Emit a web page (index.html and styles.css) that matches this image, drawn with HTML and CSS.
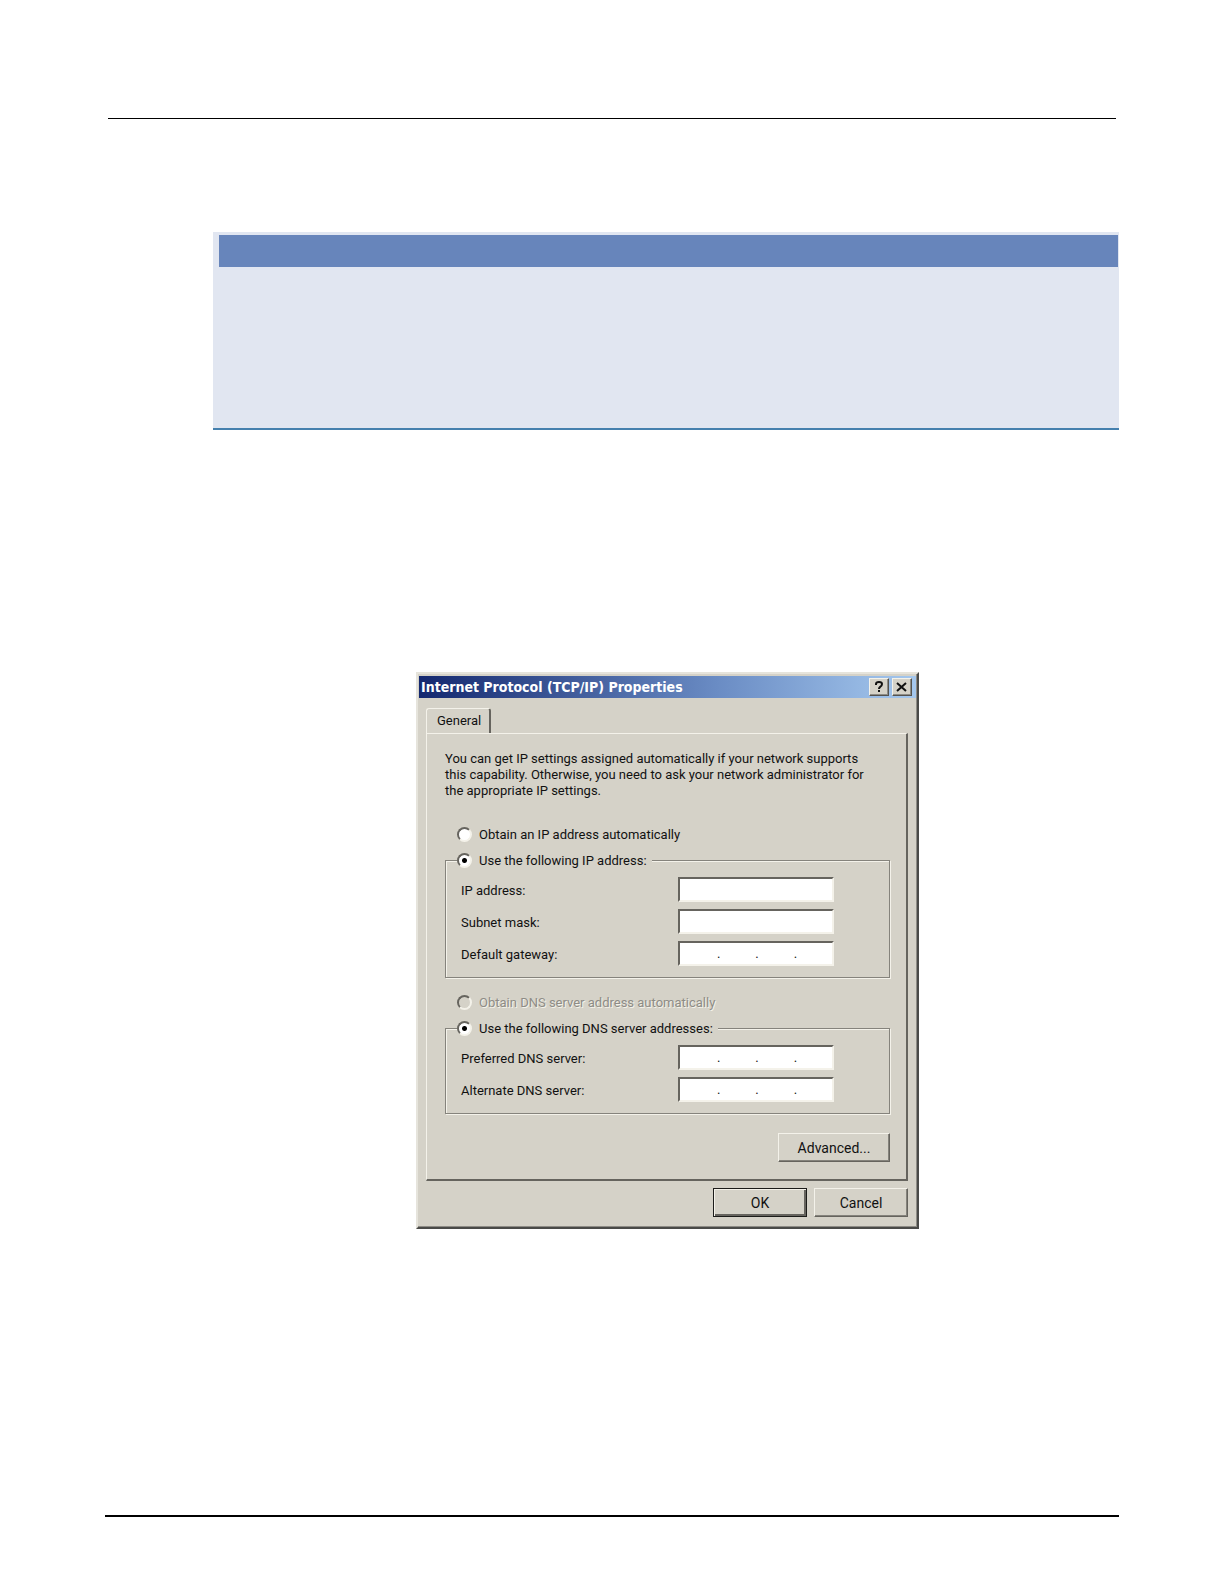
FILE: index.html
```html
<!DOCTYPE html>
<html lang="en">
<head>
    <meta charset="UTF-8">
    <meta name="viewport" content="width=device-width, initial-scale=1.0">
    <title>Internet Protocol (TCP/IP) Properties</title>
    <link rel="stylesheet" href="styles.css">
</head>
<body>
    <div class="page">
        <header class="page-header"></header>

        <section class="note">
            <div class="note-title"></div>
        </section>

        <main class="figure">
            <form class="dialog">
                <div class="title-bar">
                    <h1>Internet Protocol (TCP/IP) Properties</h1>
                    <button type="button" class="title-btn" aria-label="Help">
                        <svg width="12" height="14" viewBox="0 0 12 14" fill="none" stroke="#111" stroke-width="2">
                            <path d="M3 5V4Q3 2 6 2T9 4Q9 6 7 7Q6 8 6 9M6 10V12"/>
                        </svg>
                    </button>
                    <button type="button" class="title-btn" aria-label="Close">
                        <svg width="12" height="14" viewBox="0 0 12 14" fill="none" stroke="#111" stroke-width="2">
                            <path d="M1 3L10 11M10 3L1 11"/>
                        </svg>
                    </button>
                </div>

                <div class="tabs">
                    <button type="button" class="tab">General</button>
                </div>

                <div class="tab-panel">
                    <p class="intro">You can get IP settings assigned automatically if your network supports<br>
                        this capability. Otherwise, you need to ask your network administrator for<br>
                        the appropriate IP settings.</p>

                    <div class="option">
                        <input type="radio" name="ip" id="ip-auto">
                        <label for="ip-auto">Obtain an IP address automatically</label>
                    </div>

                    <fieldset>
                        <legend class="option">
                            <input type="radio" name="ip" id="ip-manual" checked>
                            <label for="ip-manual">Use the following IP address:</label>
                        </legend>
                        <div class="field">
                            <label for="address">IP address:</label>
                            <input type="text" class="ip-box" id="address">
                        </div>
                        <div class="field">
                            <label for="mask">Subnet mask:</label>
                            <input type="text" class="ip-box" id="mask">
                        </div>
                        <div class="field">
                            <label for="gateway">Default gateway:</label>
                            <div class="ip-box octets">
                                <input type="text" id="gateway" maxlength="3"><span>.</span>
                                <input type="text" aria-label="Default gateway, part 2" maxlength="3"><span>.</span>
                                <input type="text" aria-label="Default gateway, part 3" maxlength="3"><span>.</span>
                                <input type="text" aria-label="Default gateway, part 4" maxlength="3">
                            </div>
                        </div>
                    </fieldset>

                    <div class="option disabled">
                        <input type="radio" name="dns" id="dns-auto" disabled>
                        <label for="dns-auto">Obtain DNS server address automatically</label>
                    </div>

                    <fieldset>
                        <legend class="option">
                            <input type="radio" name="dns" id="dns-manual" checked>
                            <label for="dns-manual">Use the following DNS server addresses:</label>
                        </legend>
                        <div class="field">
                            <label for="dns1">Preferred DNS server:</label>
                            <div class="ip-box octets">
                                <input type="text" id="dns1" maxlength="3"><span>.</span>
                                <input type="text" aria-label="Preferred DNS server, part 2" maxlength="3"><span>.</span>
                                <input type="text" aria-label="Preferred DNS server, part 3" maxlength="3"><span>.</span>
                                <input type="text" aria-label="Preferred DNS server, part 4" maxlength="3">
                            </div>
                        </div>
                        <div class="field">
                            <label for="dns2">Alternate DNS server:</label>
                            <div class="ip-box octets">
                                <input type="text" id="dns2" maxlength="3"><span>.</span>
                                <input type="text" aria-label="Alternate DNS server, part 2" maxlength="3"><span>.</span>
                                <input type="text" aria-label="Alternate DNS server, part 3" maxlength="3"><span>.</span>
                                <input type="text" aria-label="Alternate DNS server, part 4" maxlength="3">
                            </div>
                        </div>
                    </fieldset>

                    <div class="panel-actions">
                        <button type="button" class="btn btn-wide">Advanced...</button>
                    </div>
                </div>

                <div class="dialog-actions">
                    <button type="submit" class="btn btn-default">OK</button>
                    <button type="button" class="btn">Cancel</button>
                </div>
            </form>
        </main>

        <footer class="page-footer"></footer>
    </div>
</body>
</html>
```
FILE: styles.css
```css
* {
    box-sizing: border-box;
}
body {
    margin: 0;
    background-color: #fff;
    color: #111;
    font-family: Roboto, "Liberation Sans", sans-serif;
    font-size: 13px;
    line-height: 16px;
}
button, input {
    font: inherit;
    color: inherit;
}
.page {
    display: flex;
    flex-direction: column;
    min-height: 100vh;
    padding: 118px 105px 67px;
}
.page-header {
    margin: 0 3px;
    border-top: 1px solid #000;
}
.page-footer {
    margin-top: auto;
    border-top: 2px solid #000;
}

/* Note box */
.note {
    min-height: 198px;
    margin: 113px 0 0 108px;
    padding: 3px 1px 0 6px;
    background-color: #e1e6f1;
    border-bottom: 2px solid #4580ae;
}
.note-title {
    height: 32px;
    background-color: #6785bb;
}

/* Dialog */
.figure {
    margin: 242px 0 0 111px;
}
.dialog {
    max-width: 503px;
    margin: 0 auto;
    padding: 2px 0 10px 1px;
    background-color: #d5d2c8;
    border: 2px solid;
    border-color: #e6e4dc #4a4a48 #4a4a48 #e6e4dc;
    box-shadow: inset -1px -1px #8e8c86;
}
.title-bar {
    display: flex;
    align-items: center;
    gap: 3px;
    height: 22px;
    margin-right: 1px;
    padding: 0 4px 0 2px;
    background: linear-gradient(to right, #14286f, #6a8cc4 60%, #a5c8ee);
}
.title-bar h1 {
    flex: 1;
    margin: 0;
    color: #fff;
    font-family: "DejaVu Sans Condensed", "DejaVu Sans", sans-serif;
    font-size: 14px;
    font-weight: bold;
    white-space: nowrap;
}
.title-btn {
    display: flex;
    align-items: center;
    justify-content: center;
    width: 20px;
    height: 18px;
    padding: 0;
    background-color: #d5d2c8;
    border: 1px solid;
    border-color: #f4f2ea #55534e #55534e #f4f2ea;
    box-shadow: inset -1px -1px #8e8c86;
}
.tabs {
    display: flex;
    padding: 10px 7px 0;
}
.tab {
    height: 25px;
    padding: 0 8px 0 10px;
    background-color: #d5d2c8;
    border: 1px solid #f4f2ea;
    border-right: 2px solid #66645e;
    border-bottom: 0;
    border-radius: 3px 3px 0 0;
}
.tab-panel {
    margin: 0 9px 0 7px;
    padding: 17px 16px 17px 18px;
    border: 1px solid #f4f2ea;
    border-right: 2px solid #66645e;
    border-bottom: 2px solid #66645e;
}
.intro {
    margin: 0 0 27px;
    white-space: nowrap;
}
.option {
    display: flex;
    align-items: center;
    gap: 7px;
    height: 16px;
    margin-left: 12px;
}
.option label,
.field label {
    padding-top: 2px;
}
.option input {
    appearance: none;
    width: 15px;
    height: 15px;
    margin: 0;
    background-color: #fff;
    border: 2px solid;
    border-color: #66645e #f4f2ea #f4f2ea #66645e;
    border-radius: 50%;
}
.option input:checked {
    background-image: radial-gradient(circle, #000 2px, transparent 3px);
}
.disabled {
    margin-top: 16px;
    color: #8e8c86;
    text-shadow: 1px 1px #f4f2ea;
}
.option input:disabled {
    background-color: #d5d2c8;
}
fieldset {
    display: flex;
    flex-direction: column;
    gap: 7px;
    margin: 10px 0 0;
    padding: 9px 55px 11px 15px;
    border: 1px solid #85837c;
    box-shadow: 1px 1px #f4f2ea, inset 1px 1px #f4f2ea;
}
legend.option {
    margin-left: -4px;
    padding: 0 5px 0 0;
    background-color: #d5d2c8;
}
.field {
    display: flex;
    align-items: center;
    justify-content: space-between;
}
.ip-box {
    width: 156px;
    height: 25px;
    padding: 0 0 0 2px;
    background-color: #fff;
    border: 2px solid;
    border-color: #66645e #f4f2ea #f4f2ea #66645e;
    border-radius: 0;
}
.octets {
    display: flex;
    align-items: center;
}
.octets input {
    flex: 1;
    min-width: 0;
    padding: 0;
    border: 0;
    background: none;
    text-align: center;
}
.panel-actions {
    display: flex;
    justify-content: flex-end;
    margin-top: 19px;
}
.dialog-actions {
    display: flex;
    justify-content: flex-end;
    gap: 7px;
    margin: 7px 9px 0 0;
}
.btn {
    width: 94px;
    height: 29px;
    padding: 0;
    background-color: #d5d2c8;
    border: 1px solid;
    border-color: #f4f2ea #66645e #66645e #f4f2ea;
    box-shadow: inset -1px -1px #85837c;
    font-size: 14px;
}
.btn-wide {
    width: 112px;
}
.btn-default {
    border: 1px solid #1c1c1a;
    box-shadow: inset 1px 1px #f4f2ea, inset -2px -2px #66645e;
}
```
